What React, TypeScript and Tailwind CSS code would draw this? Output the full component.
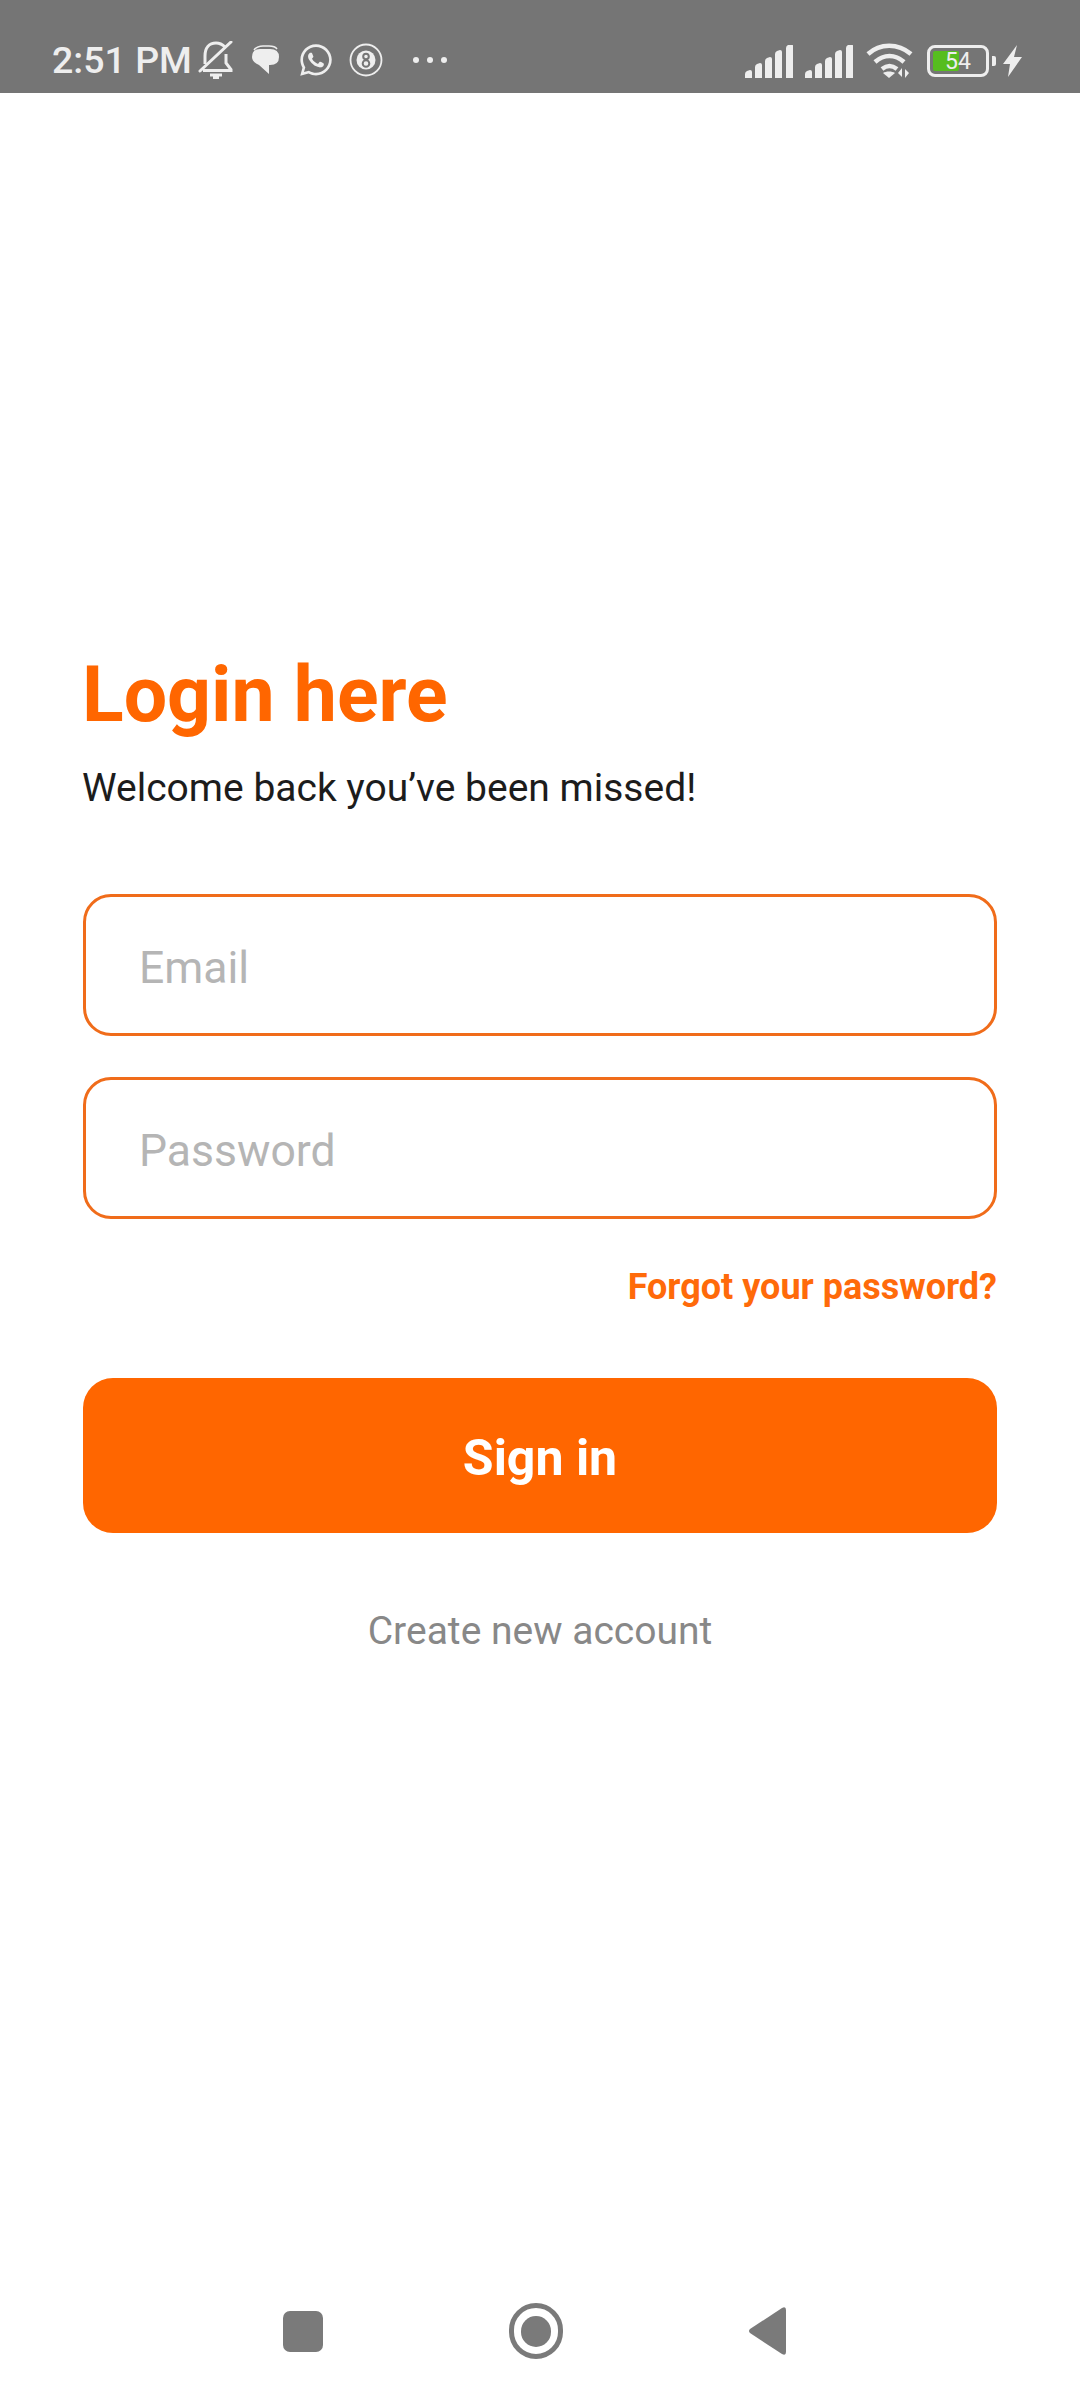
import { FaWhatsapp } from 'react-icons/fa'

function Signal() {
  const bars = [
    { x: 0, h: 7 },
    { x: 10, h: 14 },
    { x: 20, h: 20 },
    { x: 30, h: 27 },
    { x: 41, h: 33 },
  ]
  return (
    <svg width="48" height="33" viewBox="0 0 48 33" fill="#eeeeee">
      {bars.map((b) => (
        <path key={b.x} d={`M${b.x} 33V${33 - b.h + 3}q0-2 2-3l3-1q2 0 2 2V33z`} />
      ))}
    </svg>
  )
}

function BellOff() {
  return (
    <svg width="36" height="38" viewBox="0 0 36 38" fill="none" stroke="#eeeeee" strokeWidth="3">
      <path d="M7 23V15C7 7 11 2 18 2c4 0 7 2 9 4" />
      <path d="M28 13v9l5 6.500v1H5" />
      <path d="M2 30 33 1" strokeLinecap="round" />
      <path d="M12 34h12M15 37h6" />
    </svg>
  )
}

function ChatBubble() {
  return (
    <svg width="28" height="30" viewBox="0 0 28 30">
      <path d="M3 5Q6 1 12 1h6q6 0 8 3" fill="none" stroke="#eeeeee" strokeWidth="1.500" />
      <path d="M9 4h10q9 0 9 8 0 8-9 8h-1v9L8 20Q1 17 1 12 1 4 9 4z" fill="#eeeeee" />
    </svg>
  )
}

function EightBall() {
  return (
    <svg width="34" height="34" viewBox="0 0 34 34" fill="none" stroke="#eeeeee">
      <circle cx="17" cy="17" r="15.500" strokeWidth="1.800" />
      <circle cx="17" cy="17" r="9.500" fill="#eeeeee" stroke="none" />
      <circle cx="17" cy="13.500" r="2.800" stroke="#757575" strokeWidth="2" />
      <circle cx="17" cy="20.500" r="3.300" stroke="#757575" strokeWidth="2" />
    </svg>
  )
}

function Wifi() {
  return (
    <svg width="47" height="36" viewBox="0 0 47 36" fill="none" stroke="#eeeeee" strokeWidth="4.500">
      <path d="M2 11C14 0 32 0 45 11" />
      <path d="M9 19c9-8 20-8 29 0" />
      <path d="M16 26c5-4 10-4 15 0" />
      <path d="M23 35l-6-5c3-2 9-2 12 0z" fill="#eeeeee" stroke="none" />
      <path d="M36 25v9l-4-4zM39 35v-9l4 4z" fill="#eeeeee" stroke="none" />
    </svg>
  )
}

function Battery() {
  return (
    <div className="flex items-center">
      <div className="relative h-[32px] w-[62px] rounded-[8px] border-[3px] border-[#eeeeee] p-[3px]">
        <div className="h-full w-[26px] rounded-[2px] bg-[#56bd1f]" />
        <span className="absolute inset-0 flex items-center justify-center text-[23px] leading-none text-[#eeeeee]">
          54
        </span>
      </div>
      <div className="ml-[3px] h-[10px] w-[4px] rounded-r-[2px] bg-[#eeeeee]" />
    </div>
  )
}

function Bolt() {
  return (
    <svg width="19" height="32" viewBox="0 0 19 32" fill="#eeeeee">
      <path d="M14 0 0 19h7L5 32 19 12h-8z" />
    </svg>
  )
}

function StatusBar() {
  return (
    <div className="flex h-[93px] shrink-0 items-end justify-between bg-[#757575] pb-[14px] pl-[52px] pr-[58px]">
      <div className="flex items-center">
        <span className="text-[37.5px] font-medium leading-[38px] text-[#eeeeee]">2:51 PM</span>
        <div className="ml-[6px]"><BellOff /></div>
        <div className="ml-[17px]"><ChatBubble /></div>
        <FaWhatsapp className="ml-[19px] text-[36px] text-[#eeeeee]" />
        <div className="ml-[15px]"><EightBall /></div>
        <div className="ml-[30px] flex gap-[8px]">
          <div className="h-[6px] w-[6px] rounded-full bg-[#eeeeee]" />
          <div className="h-[6px] w-[6px] rounded-full bg-[#eeeeee]" />
          <div className="h-[6px] w-[6px] rounded-full bg-[#eeeeee]" />
        </div>
      </div>
      <div className="flex items-center">
        <Signal />
        <div className="ml-[12px]"><Signal /></div>
        <div className="ml-[13px]"><Wifi /></div>
        <div className="ml-[14px]"><Battery /></div>
        <div className="ml-[7px]"><Bolt /></div>
      </div>
    </div>
  )
}

function Field({ placeholder, type }: { placeholder: string; type: string }) {
  return (
    <input
      type={type}
      placeholder={placeholder}
      className="h-[142px] w-full rounded-[28px] border-[3px] border-[#f06c1a] bg-white pl-[53px] pt-[6px] text-[44.5px] outline-none placeholder:text-[#b5b5b5]"
    />
  )
}

function NavBar() {
  return (
    <div className="mt-auto flex h-[138px] shrink-0 items-center gap-[186px] pl-[283px]">
      <div className="h-[41px] w-[40px] rounded-[7px] bg-[#7a7a7a]" />
      <div className="flex h-[56px] w-[54px] items-center justify-center rounded-full border-[5px] border-[#7a7a7a]">
        <div className="h-[31px] w-[30px] rounded-full bg-[#7a7a7a]" />
      </div>
      <svg width="37" height="48" viewBox="0 0 37 48" fill="#7a7a7a">
        <path d="M1 22 33 1q4-2 4 2v42q0 4-4 2L1 26q-2-2 0-4z" />
      </svg>
    </div>
  )
}

export default function App() {
  return (
    <div className="flex h-[2400px] w-[1080px] flex-col bg-white font-['Roboto',sans-serif]">
      <StatusBar />
      <div className="flex flex-col px-[83px] pt-[557px]">
        <h1 className="-ml-[1px] text-[77px] font-bold leading-[90px] text-[#ff6600]">Login here</h1>
        <p className="-ml-[1px] mt-[26px] text-[39px] leading-[45px] text-[#1c1c1c]">Welcome back you’ve been missed!</p>
        <div className="mt-[83px] flex flex-col gap-[41px]">
          <Field placeholder="Email" type="email" />
          <Field placeholder="Password" type="password" />
        </div>
        <a className="mt-[48px] self-end text-[36px] font-bold leading-[41px] text-[#ff6a0a]">Forgot your password?</a>
        <button className="mt-[70px] h-[155px] w-full rounded-[30px] bg-[#ff6600] pt-[6px] text-[50px] font-bold text-white">
          Sign in
        </button>
        <a className="mt-[76px] text-center text-[39px] leading-[45px] text-[#888888]">Create new account</a>
      </div>
      <NavBar />
    </div>
  )
}
